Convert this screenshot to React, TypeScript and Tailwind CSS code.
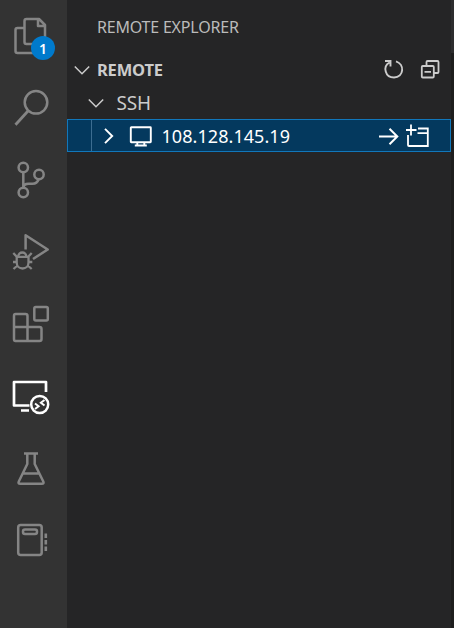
import type { ReactNode } from 'react';

function ActivityItem({ label, active = false, badge, children }: { label: string; active?: boolean; badge?: number; children: ReactNode }) {
  return (
    <button aria-label={label} className={`relative block h-[72px] w-[67px] shrink-0 ${active ? 'text-white' : 'text-[#858585]'}`}>
      <svg className="block" width="67" height="72" viewBox="0 0 67 72" fill="none" stroke="currentColor" strokeWidth="2.500" strokeLinejoin="round">
        {children}
      </svg>
      {badge !== undefined && (
        <span className="absolute left-[31px] top-[36px] flex size-6 items-center justify-center rounded-full bg-[#007acc] pt-px text-[14px] font-semibold leading-none text-white">{badge}</span>
      )}
    </button>
  );
}

function ActivityBar() {
  return (
    <nav className="flex w-[67px] shrink-0 flex-col bg-[#333333]">
      <ActivityItem label="Explorer" badge={1}>
        <path d="M24 28h-6.500q-2 0-2 2v21q0 2 2 2H34q2 0 2-2v-7" />
        <path d="M26.500 19H39l6 6V42q0 2-2 2H26.500q-2 0-2-2V21q0-2 2-2zM38 19v7h7" />
      </ActivityItem>
      <ActivityItem label="Search">
        <circle cx="36" cy="30.300" r="11.300" />
        <path d="M28 39 15.500 52.700" strokeWidth="2.800" />
      </ActivityItem>
      <ActivityItem label="Source Control">
        <circle cx="23.300" cy="23.500" r="4.700" />
        <circle cx="39" cy="30.500" r="4.700" />
        <circle cx="23.300" cy="48.500" r="4.700" />
        <path d="M23.300 28v16M38.500 35.500c-1 3-3 4.200-6 4.200h-4c-3 0-5 1.500-5 4" />
      </ActivityItem>
      <ActivityItem label="Run and Debug">
        <path d="M25.600 33.500V19.300L47.700 33.500 33 43" />
        <path d="M18.200 41c0-6 8.200-6 8.200 0M16.700 40.800h11.800v5.700c0 8-11.800 8-11.800 0zM13.300 37l3.700 4M31.700 37l-3.700 4M13 46h3.700M28.500 46h3.800M13.500 53l4-3.500M31.700 53l-4-3.500" strokeWidth="2.300" />
      </ActivityItem>
      <ActivityItem label="Extensions">
        <path d="M15.500 26h10q2 0 2 2v11h12q2 0 2 2v10q0 2-2 2h-24q-1.500 0-1.500-2V28q0-2 1.500-2zM14 39h13.500v14" />
        <rect x="34.300" y="19" width="13.500" height="13.500" rx="1.500" />
      </ActivityItem>
      <ActivityItem label="Remote Explorer" active>
        <path d="M29.500 45.500H14V22h32v10M21 50.500h8" strokeWidth="2.700" />
        <circle cx="39.700" cy="44.500" r="8.500" strokeWidth="2.500" />
        <path d="m35 43.500 3.600 2.700L35 49M44.500 40l-3.600 2.800 3.600 2.700" strokeWidth="2" strokeLinejoin="miter" />
      </ActivityItem>
      <ActivityItem label="Testing">
        <path d="M24 21.500h14M27.300 21v11l-8.500 17.500q-1 2.300 1.500 2.300h21.500q2.500 0 1.500-2.300L34.700 32V21M23.500 41.500h15" />
      </ActivityItem>
      <ActivityItem label="Notebooks">
        <rect x="18.200" y="21" width="23.500" height="30" rx="2.500" />
        <rect x="23" y="25.500" width="14" height="4.500" rx="2" />
        <path d="M45.800 29.500v4.500M45.800 36v4.500M45.800 42.500V47" strokeWidth="2.600" />
      </ActivityItem>
    </nav>
  );
}

function Chevron({ open = false }: { open?: boolean }) {
  return (
    <svg className="shrink-0" width="16" height="16" viewBox="0 0 16 16" fill="none" stroke="currentColor" strokeWidth="1.500">
      {open ? <path d="m.8 4.500 7.200 7.200 7.200-7.200" /> : <path d="m4 .8 7.200 7.200-7.200 7.200" strokeWidth="1.900" />}
    </svg>
  );
}

export default function App() {
  return (
    <main className="flex h-[628px] w-[454px] overflow-hidden bg-[#252526] font-['Noto_Sans',sans-serif] text-[#cccccc]">
      <ActivityBar />
      <section className="w-[384px] shrink-0">
        <h1 className="flex h-[53px] items-center pl-[30px] text-[16px] font-normal tracking-[-0.200px] text-[#bbbbbb]">REMOTE EXPLORER</h1>
        <div className="flex h-[33px] items-center pl-[7px]">
          <Chevron open />
          <h2 className="ml-[7px] flex-1 pt-0.5 text-[16.500px] font-bold tracking-[-0.200px]">REMOTE</h2>
          <svg className="mr-[15px]" width="22" height="22" viewBox="0 0 22 22" fill="none" stroke="currentColor" strokeWidth="1.900">
            <path d="M13 2.300c9 3 8 16-2 16.200C2 18.500-.5 7.300 6.500 3.500M2 2h5.500v5.500" />
          </svg>
          <svg className="mr-[11px]" width="20" height="20" viewBox="0 0 20 20" fill="none" stroke="currentColor" strokeWidth="1.800">
            <rect x="1.800" y="6" width="12" height="11.500" rx="1" />
            <path d="M6.500 6V2q0-1 1-1H17.500q1 0 1 1v10q0 1-1 1h-3.500M4.500 11.800H11" />
          </svg>
        </div>
        <div className="flex h-[33px] items-center pl-[21px]">
          <Chevron open />
          <span className="ml-[12.500px] pt-0.5 text-[19px] tracking-[-0.200px]">SSH</span>
        </div>
        <div className="flex h-[33px] items-center border border-[#1177bb] bg-[#04395e] text-white">
          <span className="h-full w-[24px] shrink-0 border-r border-[#3c6d91]" />
          <span className="ml-[9px] flex"><Chevron /></span>
          <svg className="ml-[12px] shrink-0" width="24" height="22" viewBox="0 0 24 22" fill="none" stroke="currentColor" strokeWidth="1.900">
            <rect x="1.800" y="2.300" width="20" height="15" rx=".5" />
            <path d="M8.300 17v3m7-3v3M5.800 20.500h12" />
          </svg>
          <span className="ml-[8.500px] flex-1 pt-px text-[18px] tracking-[0.060px]">108.128.145.19</span>
          <svg className="mr-[7px]" width="20" height="20" viewBox="0 0 20 20" fill="none" stroke="currentColor" strokeWidth="2">
            <path d="M0 10.500h18M10.500 2.700l7.800 7.800-7.800 7.800" />
          </svg>
          <svg className="mr-[20px]" width="24" height="24" viewBox="0 0 24 24" fill="none" stroke="currentColor" strokeWidth="1.800">
            <path d="M0 6h10.500M5 .5V11.500M2 11v10q0 1 1 1h18.800V4.500H12M11.500 9.200h10.300" />
          </svg>
        </div>
      </section>
      <div className="flex w-[3px] flex-col">
        <div className="h-[53px] bg-[#2d2d2f]" />
        <div className="flex-1 bg-[#1e1e1e]" />
      </div>
    </main>
  );
}
